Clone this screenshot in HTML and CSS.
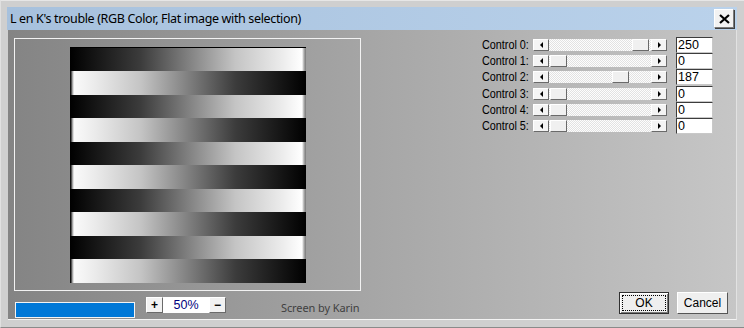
FILE: index.html
```html
<!DOCTYPE html>
<html lang="en">
<head>
  <meta charset="UTF-8">
  <title>L en K's trouble</title>
  <link rel="stylesheet" href="styles.css">
</head>
<body>
  <div class="window">
    <div class="titlebar">
      <span class="title">L en K's trouble (RGB Color, Flat image with selection)</span>
      <button class="close-btn" aria-label="Close">
        <svg width="11" height="10" viewBox="0 0 11 10"><path d="M1 1 L10 9 M10 1 L1 9" stroke="#000" stroke-width="2.2"/></svg>
      </button>
    </div>
    <div class="content">
      <div class="top-row">
        <div class="preview">
          <div class="picture">
            <div class="stripe dark"></div>
            <div class="stripe light"></div>
            <div class="stripe dark"></div>
            <div class="stripe light"></div>
            <div class="stripe dark"></div>
            <div class="stripe light"></div>
            <div class="stripe dark"></div>
            <div class="stripe light"></div>
            <div class="stripe dark"></div>
            <div class="stripe light"></div>
          </div>
        </div>

        <div class="controls">
          <div class="control-row">
            <span class="label">Control 0:</span>
            <div class="scrollbar">
              <span class="arrow left"></span>
              <div class="track"><span class="thumb" style="margin-left: 83px"></span></div>
              <span class="arrow right"></span>
            </div>
            <div class="value">250</div>
          </div>
          <div class="control-row">
            <span class="label">Control 1:</span>
            <div class="scrollbar">
              <span class="arrow left"></span>
              <div class="track"><span class="thumb" style="margin-left: 1px"></span></div>
              <span class="arrow right"></span>
            </div>
            <div class="value">0</div>
          </div>
          <div class="control-row">
            <span class="label">Control 2:</span>
            <div class="scrollbar">
              <span class="arrow left"></span>
              <div class="track"><span class="thumb" style="margin-left: 63px"></span></div>
              <span class="arrow right"></span>
            </div>
            <div class="value">187</div>
          </div>
          <div class="control-row">
            <span class="label">Control 3:</span>
            <div class="scrollbar">
              <span class="arrow left"></span>
              <div class="track"><span class="thumb" style="margin-left: 1px"></span></div>
              <span class="arrow right"></span>
            </div>
            <div class="value">0</div>
          </div>
          <div class="control-row">
            <span class="label">Control 4:</span>
            <div class="scrollbar">
              <span class="arrow left"></span>
              <div class="track"><span class="thumb" style="margin-left: 1px"></span></div>
              <span class="arrow right"></span>
            </div>
            <div class="value">0</div>
          </div>
          <div class="control-row">
            <span class="label">Control 5:</span>
            <div class="scrollbar">
              <span class="arrow left"></span>
              <div class="track"><span class="thumb" style="margin-left: 1px"></span></div>
              <span class="arrow right"></span>
            </div>
            <div class="value">0</div>
          </div>
        </div>
      </div>

      <div class="bottom-row">
        <div class="progress"></div>
        <div class="zoom">
          <button class="zoom-btn">+</button>
          <span class="zoom-value">50%</span>
          <button class="zoom-btn">&minus;</button>
        </div>
        <span class="credit">Screen by Karin</span>
        <div class="buttons">
          <button class="btn default"><span class="focus">OK</span></button>
          <button class="btn">Cancel</button>
        </div>
      </div>
    </div>
  </div>
</body>
</html>
```

FILE: styles.css
```css
body {
  margin: 0;
  width: 744px;
  height: 328px;
  overflow: hidden;
  font-family: "Liberation Sans", Arial, sans-serif;
}
.window {
  box-sizing: border-box;
  width: 744px;
  height: 328px;
  padding: 7px 7px 7px 7px;
  background: #cfcfcf;
  border-top: 1px solid #e6e6e6;
  border-left: 1px solid #e0e0e0;
  border-bottom: 1px solid #8a8a8a;
  display: flex;
  flex-direction: column;
}
.titlebar {
  height: 23px;
  margin-top: -1px;
  margin-left: -1px;
  background: linear-gradient(to right, #a7c1dd, #bad2eb);
  display: flex;
  align-items: center;
  justify-content: space-between;
  padding: 0 3px 0 3px;
}
.title {
  font-family: "Noto Sans", sans-serif;
  font-size: 12.5px;
  letter-spacing: -0.35px;
  color: #000;
}
.close-btn {
  width: 20px;
  height: 19px;
  padding: 0;
  background: #f2f2f2;
  border: 1px solid #7a7a7a;
  border-top-color: #fff;
  border-left-color: #fff;
  box-shadow: 1px 1px 0 #404040;
  display: flex;
  align-items: center;
  justify-content: center;
}
.content {
  flex: 1;
  background: linear-gradient(to right, #848484, #a6a6a6 50%, #c6c6c6);
  border-bottom: 1px solid #f4f4f4;
  border-right: 1px solid #e2e2e2;
  display: flex;
  flex-direction: column;
}
.top-row {
  display: flex;
}
.preview {
  margin: 8px 0 0 6px;
  width: 345px;
  height: 251px;
  border: 1px solid #f2f2f2;
  display: flex;
  align-items: center;
  justify-content: center;
}
.picture {
  width: 236px;
  height: 236px;
  border-top: 1px solid #000;
  box-sizing: border-box;
  display: flex;
  flex-direction: column;
}
.stripe {
  flex: 1;
}
.stripe.dark {
  background: linear-gradient(to right, #000 0, #141414 10%, #3c3c3c 30%, #808080 50%, #c4c4c4 70%, #ececec 90%, #fff calc(100% - 4px), #aaa calc(100% - 2px), #777 100%);
}
.stripe.light {
  background: linear-gradient(to right, #000 0, #222 1px, #888 2px, #fafafa 4px, #ececec 10%, #c4c4c4 30%, #808080 50%, #3c3c3c 70%, #141414 90%, #000 100%);
}
.controls {
  margin: 7px 0 0 121px;
  display: flex;
  flex-direction: column;
}
.control-row {
  display: flex;
  align-items: center;
  height: 16.2px;
}
.label {
  width: 51px;
  font-size: 12px;
  color: #000;
  transform: scaleX(0.9);
  transform-origin: left center;
  white-space: nowrap;
}
.scrollbar {
  width: 134px;
  height: 12px;
  display: flex;
}
.arrow {
  box-sizing: border-box;
  width: 16px;
  height: 12px;
  background: #f4f4f4;
  border: 1px solid #fff;
  border-right-color: #6a6a6a;
  border-bottom-color: #6a6a6a;
  display: flex;
  align-items: center;
  justify-content: center;
}
.arrow::before {
  content: "";
  border-top: 3px solid transparent;
  border-bottom: 3px solid transparent;
}
.arrow.left::before {
  border-right: 3px solid #000;
}
.arrow.right::before {
  border-left: 3px solid #000;
}
.track {
  flex: 1;
  height: 12px;
  background: repeating-conic-gradient(#fdfdfd 0 25%, #e2e2e2 0 50%) 0 0 / 2px 2px;
  display: flex;
}
.thumb {
  box-sizing: border-box;
  width: 17px;
  height: 12px;
  background: #f0f0f0;
  border: 1px solid #fff;
  border-right-color: #6a6a6a;
  border-bottom-color: #6a6a6a;
}
.value {
  box-sizing: border-box;
  width: 37px;
  height: 16px;
  margin-left: 9px;
  background: #fff;
  border: 1px solid #3c3c3c;
  border-right-color: #c8c8c8;
  border-bottom-color: #c8c8c8;
  font-size: 12.5px;
  line-height: 14px;
  padding-left: 1px;
  color: #000;
}
.bottom-row {
  flex: 1;
  display: flex;
  align-items: flex-start;
}
.progress {
  width: 118px;
  height: 14px;
  margin: 11px 0 0 7px;
  background: #0078d7;
  border: 1px solid #f4f4f4;
}
.zoom {
  display: flex;
  margin: 6px 0 0 11px;
}
.zoom-btn {
  width: 17px;
  height: 16px;
  padding: 0;
  background: #f2f2f2;
  border: 1px solid #fff;
  border-right-color: #6a6a6a;
  border-bottom-color: #6a6a6a;
  font-family: "Liberation Sans", sans-serif;
  font-size: 12px;
  font-weight: bold;
  line-height: 13px;
  color: #000;
}
.zoom-value {
  width: 46px;
  height: 16px;
  background: #fff;
  color: #000080;
  font-size: 12.5px;
  line-height: 16px;
  text-align: center;
}
.credit {
  margin: 9px 0 0 55px;
  font-family: "Noto Sans", sans-serif;
  font-size: 11px;
  letter-spacing: -0.1px;
  color: #3f3f3f;
}
.buttons {
  margin: 1px 0 0 auto;
  padding-right: 8px;
  display: flex;
  gap: 8px;
}
.btn {
  box-sizing: border-box;
  width: 51px;
  height: 22px;
  padding: 0;
  background: #efefef;
  border: 1px solid #fff;
  border-right-color: #555;
  border-bottom-color: #555;
  font-family: "Liberation Sans", sans-serif;
  font-size: 12px;
  color: #000;
}
.btn.default {
  width: 50px;
  border: 1px solid #303030;
  box-shadow: inset 1px 1px 0 #fff, inset -1px -1px 0 #7a7a7a;
  padding: 2px;
}
.focus {
  display: block;
  height: 100%;
  box-sizing: border-box;
  border: 1px dotted #000;
  line-height: 14px;
}
```
